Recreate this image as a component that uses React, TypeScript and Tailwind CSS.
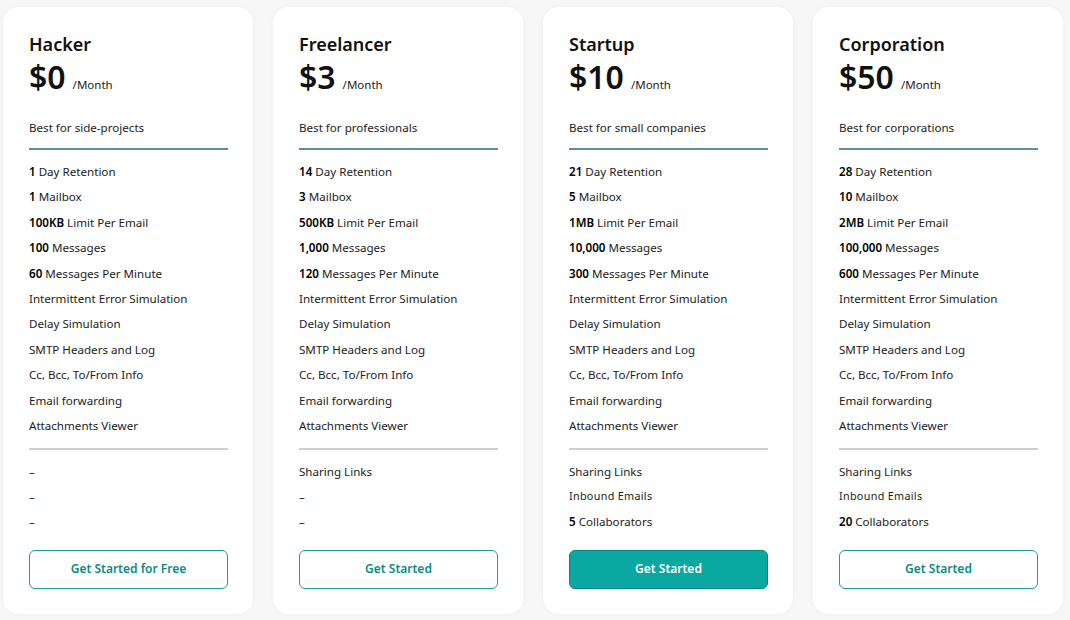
import React from "react";

type Feature = { b?: string; t: string; small?: boolean };
type Plan = {
  name: string;
  price: string;
  desc: string;
  features: Feature[];
  extras: Feature[];
  cta: string;
  primary?: boolean;
};

const common: Feature[] = [
  { t: "Intermittent Error Simulation" },
  { t: "Delay Simulation" },
  { t: "SMTP Headers and Log" },
  { t: "Cc, Bcc, To/From Info" },
  { t: "Email forwarding" },
  { t: "Attachments Viewer" },
];

const plans: Plan[] = [
  {
    name: "Hacker",
    price: "$0",
    desc: "Best for side-projects",
    features: [
      { b: "1", t: "Day Retention" },
      { b: "1", t: "Mailbox" },
      { b: "100KB", t: "Limit Per Email" },
      { b: "100", t: "Messages" },
      { b: "60", t: "Messages Per Minute" },
      ...common,
    ],
    extras: [{ t: "–" }, { t: "–" }, { t: "–" }],
    cta: "Get Started for Free",
  },
  {
    name: "Freelancer",
    price: "$3",
    desc: "Best for professionals",
    features: [
      { b: "14", t: "Day Retention" },
      { b: "3", t: "Mailbox" },
      { b: "500KB", t: "Limit Per Email" },
      { b: "1,000", t: "Messages" },
      { b: "120", t: "Messages Per Minute" },
      ...common,
    ],
    extras: [{ t: "Sharing Links" }, { t: "–" }, { t: "–" }],
    cta: "Get Started",
  },
  {
    name: "Startup",
    price: "$10",
    desc: "Best for small companies",
    features: [
      { b: "21", t: "Day Retention" },
      { b: "5", t: "Mailbox" },
      { b: "1MB", t: "Limit Per Email" },
      { b: "10,000", t: "Messages" },
      { b: "300", t: "Messages Per Minute" },
      ...common,
    ],
    extras: [
      { t: "Sharing Links" },
      { t: "Inbound Emails", small: true },
      { b: "5", t: "Collaborators" },
    ],
    cta: "Get Started",
    primary: true,
  },
  {
    name: "Corporation",
    price: "$50",
    desc: "Best for corporations",
    features: [
      { b: "28", t: "Day Retention" },
      { b: "10", t: "Mailbox" },
      { b: "2MB", t: "Limit Per Email" },
      { b: "100,000", t: "Messages" },
      { b: "600", t: "Messages Per Minute" },
      ...common,
    ],
    extras: [
      { t: "Sharing Links" },
      { t: "Inbound Emails", small: true },
      { b: "20", t: "Collaborators" },
    ],
    cta: "Get Started",
  },
];

function Row({ f, h }: { f: Feature; h: string }) {
  return (
    <li className={`flex items-center ${h} ${f.small ? "text-[10.8px] tracking-[0.3px]" : "text-[11.6px]"} text-[#1c1c1c]`}>
      <span className="whitespace-nowrap">
        {f.b && <span className="font-semibold text-black">{f.b} </span>}
        {f.t}
      </span>
    </li>
  );
}

function Card({ p }: { p: Plan }) {
  return (
    <div className="w-[250px] h-[607px] shrink-0 bg-white rounded-[16px] shadow-[0_0_6px_rgba(0,0,0,0.03)] px-[26px] pt-[25px] flex flex-col">
      <h2 className="text-[18px] leading-[24px] font-semibold text-[#111]">{p.name}</h2>
      <div className="flex items-baseline mt-[3px] h-[36px]">
        <span className="text-[32px] leading-[36px] font-semibold text-[#111]">{p.price}</span>
        <span className="text-[11.5px] text-[#222] ml-[7px]">/Month</span>
      </div>
      <p className="text-[11.6px] leading-[18px] mt-[24px] text-[#222]">{p.desc}</p>
      <div className="w-[199px] h-[2px] bg-[#5e8f96] mt-[11px]" />
      <ul className="mt-[9px]">
        {p.features.map((f, i) => (
          <Row key={i} f={f} h="h-[25.4px]" />
        ))}
      </ul>
      <div className="w-[199px] h-[1.5px] bg-[#cfcfcf] mt-[10px]" />
      <ul className="mt-[9px]">
        {p.extras.map((f, i) => (
          <Row key={i} f={f} h="h-[25px]" />
        ))}
      </ul>
      <button
        className={`mt-[16px] w-[199px] h-[39px] rounded-[6px] text-[12px] font-semibold ${
          p.primary
            ? "bg-[#0aa8a0] border-[1.5px] border-[#07857e] text-white"
            : "bg-white border-[1.5px] border-[#1a9e96] text-[#0b8a82]"
        }`}
      >
        {p.cta}
      </button>
    </div>
  );
}

export default function App() {
  return (
    <div
      className="w-[1070px] h-[620px] bg-[#f7f7f7] flex gap-[20px] pl-[3px] pt-[7px] overflow-hidden"
      style={{ fontFamily: "'Noto Sans', 'Open Sans', sans-serif" }}
    >
      {plans.map((p) => (
        <Card key={p.name} p={p} />
      ))}
    </div>
  );
}
